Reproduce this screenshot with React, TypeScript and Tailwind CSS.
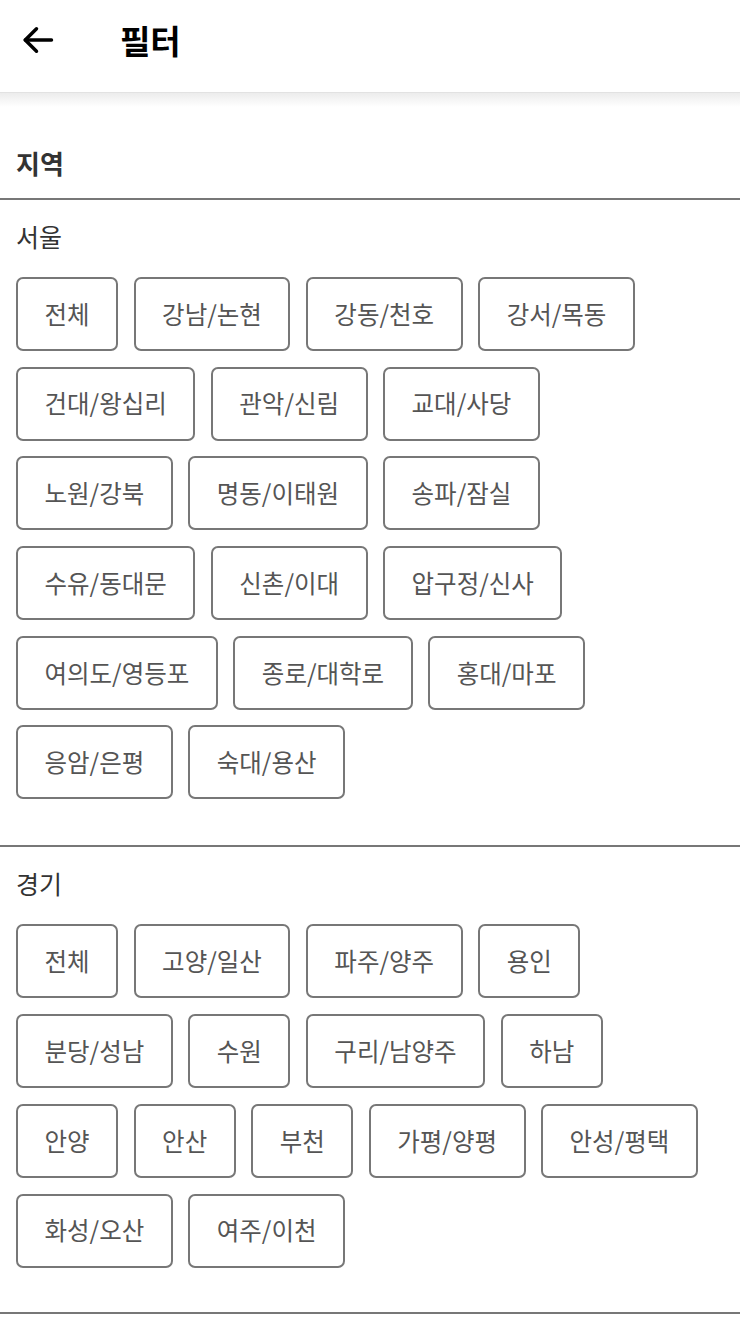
import React from 'react';

const seoul = [
    '전체', '강남/논현', '강동/천호', '강서/목동', '건대/왕십리', '관악/신림', '교대/사당',
    '노원/강북', '명동/이태원', '송파/잠실', '수유/동대문', '신촌/이대', '압구정/신사',
    '여의도/영등포', '종로/대학로', '홍대/마포', '응암/은평', '숙대/용산',
];

const gyeonggi = [
    '전체', '고양/일산', '파주/양주', '용인', '분당/성남', '수원', '구리/남양주', '하남',
    '안양', '안산', '부천', '가평/양평', '안성/평택', '화성/오산', '여주/이천',
];

const font = { fontFamily: '"Noto Sans CJK KR", "Noto Sans", sans-serif' };

const Chip: React.FC<{ label: string }> = ({ label }) => (
    <button className="h-[74px] px-[26.5px] border-2 border-[#777777] rounded-[7px] bg-white text-[24.5px] leading-none text-[#555555]">
        {label}
    </button>
);

const Region: React.FC<{ title: string; items: string[] }> = ({ title, items }) => (
    <div>
        <div className="pt-[18px] px-[16px] text-[25px] leading-[36px] text-[#333333]">{title}</div>
        <div className="mt-[23px] pl-[16px] pr-[35px] flex flex-wrap gap-x-[15.5px] gap-y-[15.7px]">
            {items.map((item) => (
                <Chip key={item} label={item} />
            ))}
        </div>
    </div>
);

export default function App() {
    return (
        <div className="w-[740px] min-h-[1338px] bg-white" style={font}>
            <div className="h-[92px] pb-[12px] flex items-center bg-white">
                <button className="ml-[20px] w-[36px] h-[36px] flex items-center justify-center text-black" aria-label="뒤로">
                    <svg width="36" height="36" viewBox="0 0 24 24" fill="none" stroke="currentColor" strokeWidth={2.3} strokeLinecap="round" strokeLinejoin="round">
                        <path d="M21 12H3.5" />
                        <path d="M11 4.5L3.5 12l7.5 7.5" />
                    </svg>
                </button>
                <h1 className="ml-[64px] text-[33px] font-bold text-black leading-none">필터</h1>
            </div>
            <div className="h-[1px] bg-[#e2e2e2]" />
            <div className="h-[14px] bg-gradient-to-b from-[#ececec] to-white" />

            <div className="pt-[38px] pb-[17px] px-[16px] text-[26px] leading-[36px] font-bold text-[#333333]">지역</div>
            <div className="h-[2px] bg-[#777777]" />

            <Region title="서울" items={seoul} />
            <div className="mt-[46px] h-[2px] bg-[#777777]" />

            <Region title="경기" items={gyeonggi} />
            <div className="mt-[44px] h-[2px] bg-[#777777]" />
        </div>
    );
}
